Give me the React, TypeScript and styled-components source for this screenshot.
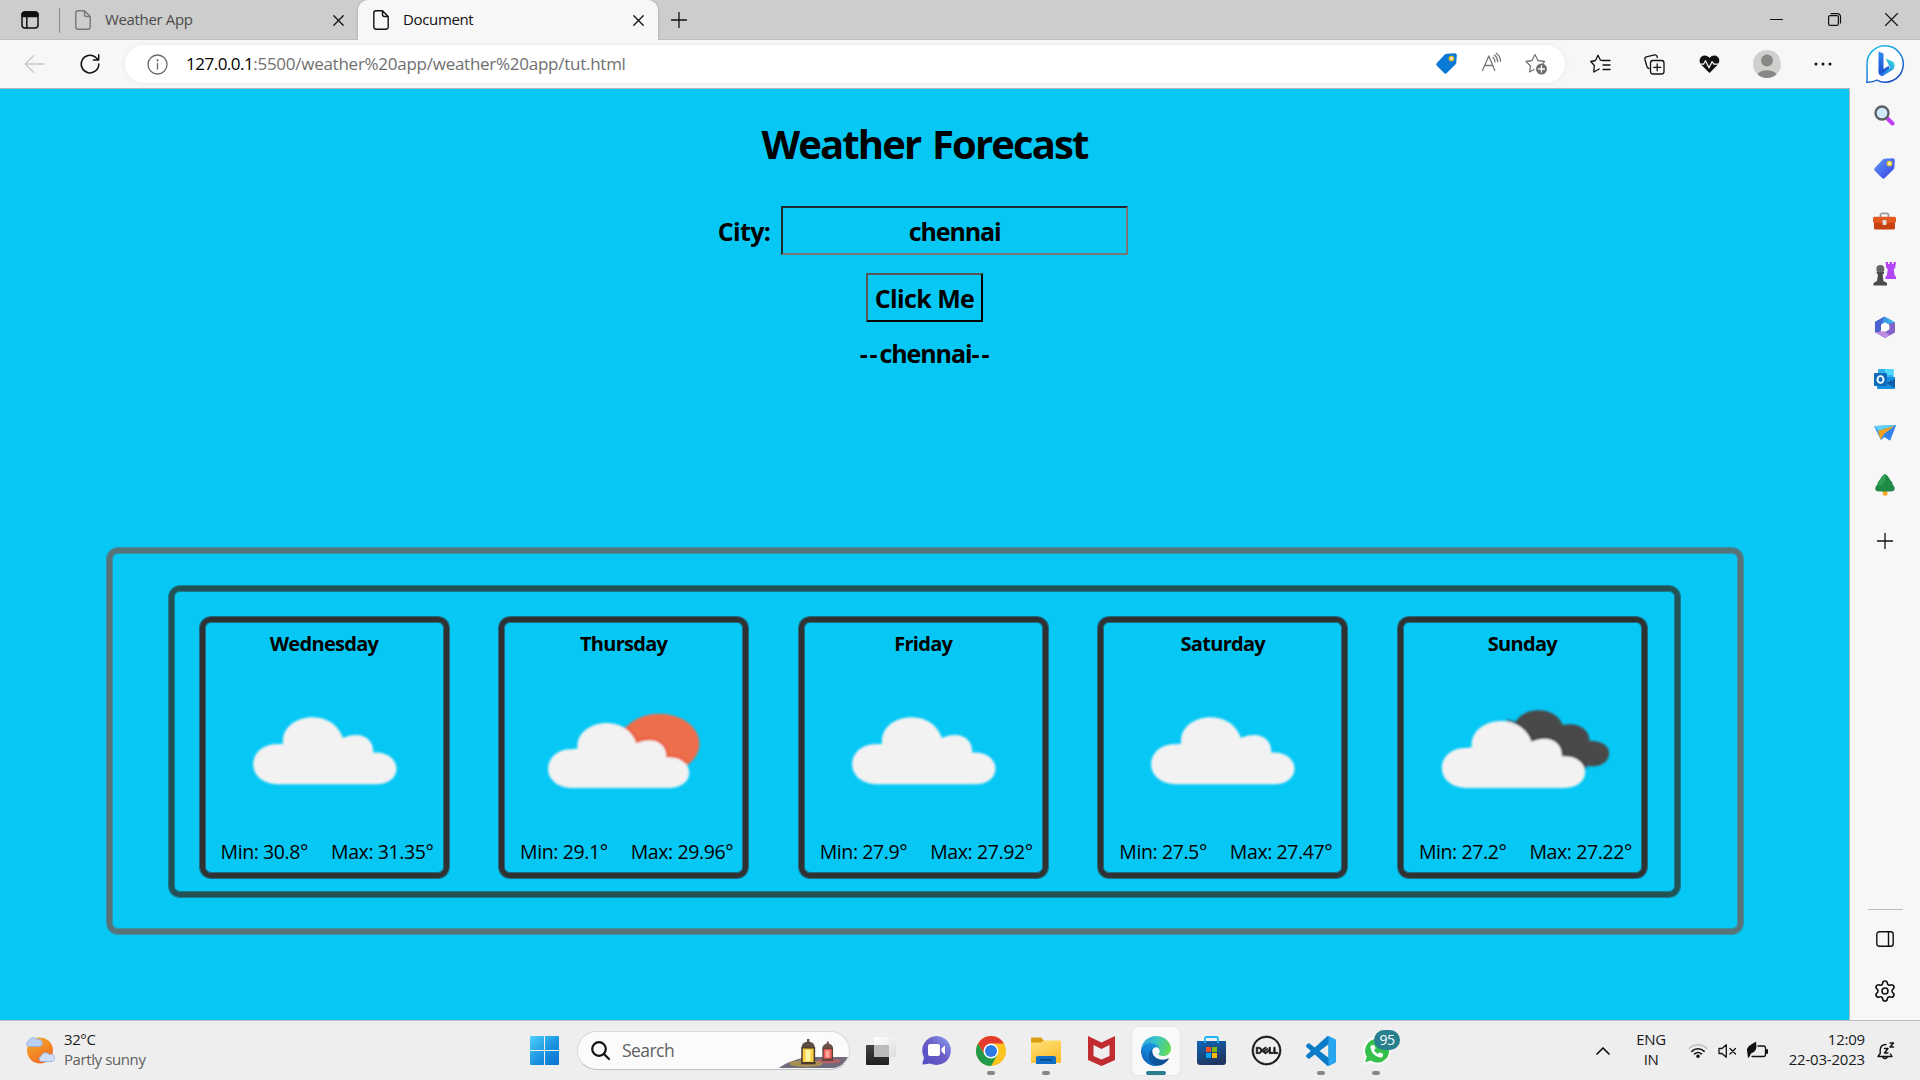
import React from 'react';
import styled, { createGlobalStyle } from 'styled-components';
import { Settings } from 'lucide-react';
import { FaPhone } from 'react-icons/fa6';
import { SiDell } from 'react-icons/si';

const Global = createGlobalStyle`
  * { box-sizing: border-box; }
  body { margin: 0; overflow: hidden; font-family: "Open Sans", "Noto Sans", sans-serif; }
  svg { display: block; flex: none; overflow: visible; }
`;

const Screen = styled.div`
  width: 1920px;
  height: 1080px;
  display: flex;
  flex-direction: column;
  background: #f7f7f7;
  overflow: hidden;
`;

/* ---------- tab strip ---------- */
const TabStrip = styled.header`
  height: 40px;
  flex: none;
  display: flex;
  background: #cdcdcd;
  box-shadow: inset 0 -1px 0 #bdbdbd;
`;
const TabActions = styled.div`
  width: 60px;
  padding: 11px 0 0 21px;
  display: flex;
  justify-content: space-between;
  &::after { content: ''; width: 1px; height: 25px; margin-top: -3px; background: #8b8b8b; }
`;
const Tab = styled.div<{ $active?: boolean; $width: number }>`
  width: ${p => p.$width}px;
  height: 40px;
  padding: 0 14px 0 15px;
  display: flex;
  align-items: center;
  border-radius: 10px 10px 0 0;
  background: ${p => (p.$active ? '#f7f7f7' : 'transparent')};
  color: ${p => (p.$active ? '#111' : '#4a4a4a')};
  box-shadow: ${p => (p.$active ? '0 0 3px rgba(0,0,0,.22)' : 'none')};
  clip-path: inset(0 -4px 0 -4px);
`;
const TabTitle = styled.span`
  flex: 1;
  margin-left: 14px;
  padding-bottom: 2px;
  font-size: 15px;
  line-height: 20px;
  letter-spacing: -0.35px;
`;
const NewTab = styled.div`padding: 12px 0 0 13px;`;
const WindowButtons = styled.div`
  margin-left: auto;
  display: flex;
  gap: 44.5px;
  padding: 13px 22px 0 0;
`;

/* ---------- toolbar ---------- */
const Toolbar = styled.div`
  height: 48px;
  flex: none;
  display: flex;
  align-items: center;
  background: #f7f7f7;
  padding-left: 24px;
`;
const NavButtons = styled.div`
  width: 101px;
  flex: none;
  padding-right: 25px;
  display: flex;
  align-items: center;
  justify-content: space-between;
`;
const AddressBar = styled.div`
  width: 1440px;
  flex: none;
  height: 38px;
  border-radius: 19px;
  background: #fff;
  box-shadow: 0 0 5px rgba(0, 0, 0, .07);
  display: flex;
  align-items: center;
  padding: 0 17px 0 22px;
`;
const Url = styled.div`
  flex: 1;
  margin-left: 18px;
  font-size: 17px;
  line-height: 24px;
  letter-spacing: -0.26px;
  color: #707070;
  b { font-weight: 400; color: #000; letter-spacing: -0.5px; }
`;
const AddressActions = styled.div`display: flex; gap: 24px;`;
const ToolActions = styled.div`
  flex: 1;
  display: flex;
  align-items: center;
  padding: 0 16px 0 25px;
  gap: 33.3px;
`;
const Last = styled.div`margin-left: auto;`;

/* ---------- page ---------- */
const Body = styled.div`flex: 1; display: flex; min-height: 0;`;
const Page = styled.main`
  width: 1850px;
  border-top: 1px solid #b4b7b8;
  border-right: 1px solid #b4b7b8;
  background: #07c8f5;
  color: #000;
  display: flex;
  flex-direction: column;
  align-items: center;
`;
const Title = styled.h1`
  margin: 27px 0 0;
  font-size: 40px;
  line-height: 56px;
  font-weight: 700;
  letter-spacing: -1.85px;
  word-spacing: 3px;
`;
const CityForm = styled.form`
  display: flex;
  flex-direction: column;
  align-items: center;
  margin-top: 34px;
  font-size: 25px;
  font-weight: 700;
`;
const Field = styled.label`
  display: flex;
  align-items: center;
  gap: 11px;
  letter-spacing: -0.7px;
  margin-right: 3px;
`;
const CityInput = styled.input`
  width: 347px;
  height: 49px;
  padding: 0;
  border: 2px solid;
  border-color: #1e2a2c #767676 #767676 #1e2a2c;
  background: transparent;
  font: inherit;
  letter-spacing: -1.1px;
  text-align: center;
  color: #000;
  outline: none;
`;
const SubmitButton = styled.button`
  width: 117px;
  height: 49px;
  margin-top: 18px;
  padding: 0;
  border: 2px solid;
  border-color: #555 #000 #000 #555;
  background: transparent;
  font: inherit;
  color: #000;
  letter-spacing: -0.6px;
  white-space: nowrap;
`;
const CityName = styled.div`
  display: flex;
  margin: 14px 0 0 2px;
  font-size: 25px;
  line-height: 34px;
  font-weight: 700;
  letter-spacing: -1.1px;
`;
const Dashes = styled.span`letter-spacing: 1.9px;`;

const Frame = styled.section<{ $edge: string; $color: string }>`
  border: 5px solid ${p => p.$color};
  border-radius: 11px;
  box-shadow: 0 0 0 1px ${p => p.$edge}, inset 0 0 0 1px ${p => p.$edge};
`;
const Outer = styled(Frame)`
  width: 1636px;
  height: 386px;
  margin-top: 178px;
  padding: 33px 57px;
`;
const Inner = styled(Frame)`
  width: 1511px;
  height: 311px;
  padding: 26px;
  display: flex;
  gap: 50.6px;
`;
const Card = styled(Frame)`
  width: 249px;
  flex: none;
  height: 261px;
  display: flex;
  flex-direction: column;
  align-items: center;
`;
const Day = styled.h2`
  margin: 8px 0 0;
  font-size: 20px;
  line-height: 28px;
  font-weight: 700;
  letter-spacing: -0.7px;
`;
const Sky = styled.div`
  flex: 1;
  display: flex;
  justify-content: center;
  padding: 47px 0 0 1px;
`;
const Temps = styled.div`
  width: 100%;
  display: flex;
  justify-content: space-between;
  padding: 0 10px 7px 16px;
  font-size: 19.5px;
  line-height: 28px;
  letter-spacing: -0.4px;
  white-space: nowrap;
`;

/* ---------- sidebar ---------- */
const Sidebar = styled.aside`
  width: 70px;
  padding: 1px 1px 7px 0;
  display: flex;
  flex-direction: column;
  align-items: center;
  background: #f7f7f7;
`;
const SideItem = styled.div<{ $h?: number }>`
  height: ${p => p.$h ?? 52.8}px;
  display: flex;
  align-items: center;
  justify-content: center;
`;
const SideRule = styled.div`
  margin: auto 0 0 1px;
  width: 35px;
  height: 1px;
  background: #bdbdbd;
`;

/* ---------- taskbar ---------- */
const Taskbar = styled.footer`
  height: 60px;
  flex: none;
  display: flex;
  align-items: center;
  border-top: 1px solid #bcbfc0;
  background: #eee;
  color: #1b1b1b;
`;
const Weather = styled.div`
  width: 520px;
  display: flex;
  align-items: center;
  gap: 9px;
  padding-left: 25px;
`;
const TwoLines = styled.div`
  padding-bottom: 4px;
  font-size: 15px;
  line-height: 20px;
  letter-spacing: -0.4px;
  white-space: nowrap;
`;
const Muted = styled.div`color: #5f5f5f;`;
const Slot = styled.div<{ $active?: boolean }>`
  position: relative;
  width: 48px;
  height: 48px;
  margin-right: 7px;
  display: flex;
  align-items: center;
  justify-content: center;
  border-radius: 6px;
  background: ${p => (p.$active ? '#f9f9f9' : 'transparent')};
  box-shadow: ${p => (p.$active ? '0 0 0 1px #e6e6e6' : 'none')};
`;
const Running = styled.i<{ $active?: boolean }>`
  position: absolute;
  left: ${p => (p.$active ? 14 : 20)}px;
  bottom: 0;
  width: ${p => (p.$active ? 20 : 8)}px;
  height: 4px;
  border-radius: 2px;
  background: ${p => (p.$active ? '#2a7f8c' : '#868686')};
`;
const Badge = styled.b`
  position: absolute;
  left: 22px;
  top: 3px;
  width: 26px;
  height: 20px;
  border-radius: 10px;
  background: #26808e;
  color: #fff;
  font-weight: 400;
  font-size: 14px;
  line-height: 19px;
  text-align: center;
  letter-spacing: -0.4px;
`;
const SearchBox = styled.div`
  width: 273px;
  height: 39px;
  margin: 0 7px 0 2px;
  padding-left: 13px;
  display: flex;
  align-items: center;
  border-radius: 20px;
  border: 1px solid #dadada;
  border-bottom-color: #c2c2c2;
  background: #fbfbfb;
  font-size: 17.5px;
  letter-spacing: -0.55px;
  color: #606060;
  overflow: hidden;
`;
const SearchText = styled.span`flex: 1; margin-left: 12px; padding-bottom: 2px;`;
const ArtSlot = styled.div`align-self: flex-end; padding-bottom: 1px;`;
const Tray = styled.div`
  margin-left: auto;
  display: flex;
  align-items: center;
  padding-right: 25px;
`;
const Lang = styled(TwoLines)`width: 30px; margin: 0 22px 0 26px; text-align: center;`;
const Status = styled.div`display: flex; gap: 10px; align-items: center;`;
const Clock = styled(TwoLines)`
  width: 80px;
  margin: 0 12px 0 17px;
  text-align: right;
  letter-spacing: -0.2px;
`;

/* ---------- icons ---------- */
type IconProps = { w?: number; h?: number; box?: string; color?: string; sw?: number; children: React.ReactNode };
const Line = ({ w = 20, h = w, box, color = '#111', sw = 1.3, children }: IconProps) => (
  <svg width={w} height={h} viewBox={box ?? `0 0 ${w} ${h}`} fill="none" stroke={color} strokeWidth={sw} strokeLinecap="round" strokeLinejoin="round">
    {children}
  </svg>
);
const Art = ({ w = 20, h = w, box, children }: IconProps) => (
  <svg width={w} height={h} viewBox={box ?? `0 0 ${w} ${h}`}>{children}</svg>
);

const PageIcon = ({ color }: { color: string }) => (
  <Line w={16} h={20} color={color} sw={1.4}>
    <path d="M9.500 .8H3A2.200 2.200 0 0 0 .8 3v14A2.200 2.200 0 0 0 3 19.200h10a2.200 2.200 0 0 0 2.200-2.200V6.500zV4.500a2 2 0 0 0 2 2h3.700" />
  </Line>
);
const Cross = () => (
  <Line w={11} color="#111" sw={1.3}><path d="M.8.8l9.400 9.400M10.200.8L.8 10.200" /></Line>
);

const CLOUD = 'M565 763C520 763 488 738 488 703C488 668 520 641 560 643L578 641C572 598 612 562 668 562C712 562 745 588 757 624C770 618 783 615 797 615C828 615 850 636 848 668C890 664 918 688 918 716C918 742 895 763 855 763Z';

type Kind = 'cloud' | 'sun' | 'dark';
const SkyIcon = ({ kind }: { kind: Kind }) => (
  <svg width="188" height="90" viewBox="421.5 525 564 270">
    <defs>
      <clipPath id="sunClip"><ellipse cx="812" cy="632" rx="118" ry="90" /></clipPath>
      <clipPath id="darkClip"><path d="M680 545L903 560L962 680L920 706L860 706L690 600Z" /></clipPath>
      <filter id="soft" x="-5%" y="-5%" width="110%" height="110%"><feGaussianBlur stdDeviation="2.4" /></filter>
    </defs>
    <g filter="url(#soft)">
      {kind === 'cloud' && <path d={CLOUD} fill="#f2f2f2" />}
      {kind === 'sun' && (
        <>
          <ellipse cx="810" cy="641" rx="120" ry="90" fill="#ec6e4c" />
          <path d={CLOUD} transform="translate(-5 34) scale(.985 .97)" fill="none" stroke="#ee4a2c" strokeOpacity=".8" strokeWidth="12" clipPath="url(#sunClip)" />
          <path d={CLOUD} transform="translate(-5 34) scale(.985 .97)" fill="#f2f2f2" />
        </>
      )}
      {kind === 'dark' && (
        <>
          <path d="M681 577C693 553 720 541 751 541C785 541 812 558 823 585C856 576 903 590 903 632C940 632 962 648 962 669C962 694 940 709 911 709L860 709L700 640Z" fill="#48484a" />
          <path d={CLOUD} transform="translate(-28 11)" fill="none" stroke="#333437" strokeOpacity=".8" strokeWidth="12" clipPath="url(#darkClip)" />
          <path d={CLOUD} transform="translate(-28 11)" fill="#f2f2f2" />
        </>
      )}
    </g>
  </svg>
);

const Tag = ({ a, b, hole }: { a: string; b: string; hole: string }) => (
  <Art w={21}>
    <defs><linearGradient id={`t${a.slice(1)}`} x2="1" y2="1"><stop stopColor={a} /><stop offset="1" stopColor={b} /></linearGradient></defs>
    <path d="M10.500.8L18.500.2A2 2 0 0 1 20.800 2.400L20.300 9.800A3 3 0 0 1 19.400 11.600L10.800 20A2 2 0 0 1 8 20L.8 12.800A2 2 0 0 1 .8 10L8.800 1.600A3 3 0 0 1 10.500.8Z" fill={`url(#t${a.slice(1)})`} />
    <circle cx="15.500" cy="5.500" r="2.200" fill="#fff3c4" stroke={hole} strokeWidth="1.300" />
  </Art>
);

const Bing = () => (
  <Art w={38}>
    <defs>
      <linearGradient id="bb" x1="0" y1="0" x2=".6" y2="1"><stop stopColor="#1fcbf0" /><stop offset="1" stopColor="#1b50c8" /></linearGradient>
      <linearGradient id="bs" x2="0" y2="1"><stop stopColor="#2f8cf2" /><stop offset="1" stopColor="#1b49c9" /></linearGradient>
      <linearGradient id="bc" x1="1" x2="0" y2="1"><stop stopColor="#3ae0dc" /><stop offset="1" stopColor="#2560ea" /></linearGradient>
    </defs>
    <path d="M19 .8a18.200 18.200 0 1 1-8.200 34.400C8 36.800 4 37.300.8 37.200 1.500 33 1 30 1 19A18 18 0 0 1 19 .8Z" fill="#fff" stroke="url(#bb)" strokeWidth="1.500" />
    <path d="M12.500 6.500L17.500 8.500V24L23 20.800V24.500L17 30.500C14.500 31 12.500 29.500 12.500 27Z" fill="url(#bs)" />
    <path d="M19.800 13.500L26 16.200C29.500 18 29.400 23 26.500 25L17.500 30.500C15 31.700 13 30 12.700 27.500C14 29.500 16 28.500 17.500 27.500L24 22.500L22 18.500Z" fill="url(#bc)" />
  </Art>
);

const SideIcons: React.ReactNode[] = [
  <Art w={21}>
    <path d="M13.500 13.500L18.500 18.500" stroke="#c13cf5" strokeWidth="4" strokeLinecap="round" />
    <circle cx="8" cy="8" r="6.500" fill="#cfe8fa" stroke="#5f6063" strokeWidth="2.300" />
  </Art>,
  <Tag a="#5b9cf5" b="#3b3ce8" hole="#e8c820" />,
  <Art w={23} h={18}>
    <path d="M7.500 6V3a1.700 1.700 0 0 1 1.700-1.700h4.600A1.700 1.700 0 0 1 15.500 3V6" fill="none" stroke="#999" strokeWidth="1.700" />
    <rect x="1" y="5" width="21" height="12.500" rx="1.500" fill="#c8410f" />
    <rect x="0" y="4.800" width="23" height="6" rx="1.500" fill="#e3591f" />
    <rect x="9.500" y="8" width="4" height="5" rx="1" fill="#ddd" />
  </Art>,
  <Art w={23} h={23}>
    <path d="M12.500 0h2.500v2h1.500V0h2.500v2h1.500V0H23l-.8 6-1.400 1 .7 6 1.500 2v2H12.500v-2l1.500-2 .7-6-1.400-1Z" fill="#b445f5" />
    <circle cx="7.300" cy="7" r="4" fill="#666" />
    <path d="M3.500 10h7.600l-.5 2-1 .5.900 6.500L14 21v2.500H.500V21L4 19l1-6.500-1-.5Z" fill="#4b4b4b" />
  </Art>,
  <Art w={22}>
    <defs><linearGradient id="m3" x2="1"><stop stopColor="#3a6be0" /><stop offset="1" stopColor="#3ec4f2" /></linearGradient></defs>
    <path d="M10.500.5L20 5.500 21 12 15.500 9 11 6.500 7 8.500V14L1 16.500V6Z" fill="url(#m3)" />
    <path d="M1 6L10 1 7.500 6 7 14 6 17.500 1 16.500Z" fill="#4a62cf" />
    <path d="M21 6V16.500L11 22 1.500 16.500 6 17.500 15.500 12.500 15 8Z" fill="#8261c9" />
    <path d="M1.500 16.500L11 22 16 19 9 15Z" fill="#c18be0" />
    <path d="M11 6.500L15.200 9v4.500L11 16 7 13.500V9Z" fill="#fff" />
  </Art>,
  <Art w={21} h={20}>
    <rect x="4" y="0" width="15.500" height="12" rx="1" fill="#33b1ec" />
    <rect x="11" y="0" width="8.500" height="6" fill="#50d9ff" />
    <path d="M3 8h18v11a1 1 0 0 1-1 1H4a1 1 0 0 1-1-1Z" fill="#1490df" />
    <path d="M21 10v9L12 14Z" fill="#0f5ea8" />
    <rect x="0" y="4" width="13" height="13" rx="1" fill="#0f6cbd" />
    <ellipse cx="6.500" cy="10.500" rx="3" ry="3.400" fill="none" stroke="#fff" strokeWidth="1.900" />
  </Art>,
  <Art w={22} h={17}>
    <path d="M0 2L22 1 16 16.500 10.500 13 7 16Z" fill="#2f8fef" />
    <path d="M0 2L22 1 4.500 7Z" fill="#5fd0f5" />
    <path d="M4 7L21.500 1.500 9.500 11 6.500 15.500Z" fill="#f3a21c" />
    <path d="M10 10L22 1 16 16.500 9 12Z" fill="#3482ee" />
  </Art>,
  <Art w={20} h={21}>
    <rect x="7.800" y="15" width="4.600" height="6.500" rx="1" fill="#f3a51d" />
    <path d="M10 0C14 2 14 5 17 8C18 9 17 9.500 18 11C21 14 20 17.500 16 17.500H4C0 17.500-1 14 2 11C3 9.500 2 9 3 8C6 5 6 2 10 0Z" fill="#1f8a48" />
    <path d="M10 0C7 2 6.500 5 4 8C2 11 3 12 6 11C11 8 11 4 10 0Z" fill="#39a95a" opacity=".7" />
  </Art>,
];

const WeatherBug = () => (
  <Art w={30} h={30}>
    <defs><linearGradient id="sun" x2=".6" y2="1"><stop stopColor="#f3b52d" /><stop offset="1" stopColor="#f26a21" /></linearGradient></defs>
    <circle cx="15" cy="14.500" r="13" fill="url(#sun)" />
    <path d="M3.500 10.500a3 3 0 0 1 0-5.500A5 5 0 0 1 12 3.500a3.600 3.600 0 0 1 3 7Z" fill="#bcd0f2" stroke="#8fabe0" strokeWidth=".8" />
    <path d="M16 25.500a3 3 0 0 1 0-5.500 5 5 0 0 1 8.500-1.500 3.600 3.600 0 0 1 2.500 7Z" fill="#cfdef8" stroke="#8fabe0" strokeWidth=".8" />
  </Art>
);

const Lanterns = () => (
  <Art w={70} h={29}>
    <path d="M0 29C8 23 20 18.500 34 18H69C66 24 61 28 55 29Z" fill="#6e6a7c" />
    <ellipse cx="27" cy="24.500" rx="17" ry="3.500" fill="#c9a83a" opacity=".6" />
    <ellipse cx="50" cy="22" rx="12" ry="2.500" fill="#e05a60" opacity=".6" />
    <path d="M22.500 8.500a6.700 6 0 0 1 13.400 0Z" fill="#5e4b42" />
    <rect x="28" y="0" width="2.400" height="4" fill="#5e4b42" />
    <rect x="23" y="8.800" width="12.400" height="15" fill="#f7cf3f" stroke="#4a3a33" strokeWidth="1.500" />
    <rect x="26.500" y="11" width="5" height="11" fill="#fff3a8" />
    <rect x="22" y="23" width="14.400" height="2.300" fill="#4a3a33" />
    <path d="M43.300 9.500a5.400 5 0 0 1 10.800 0Z" fill="#6b5148" />
    <rect x="47.800" y="2.500" width="2" height="3" fill="#6b5148" />
    <rect x="44" y="9.500" width="9.400" height="11" fill="#ef5a5d" stroke="#5b4038" strokeWidth="1.300" />
    <rect x="46.500" y="11.500" width="4" height="7" fill="#ffa79a" />
    <rect x="43.200" y="19.800" width="11" height="2" fill="#5b4038" />
  </Art>
);

const StartLogo = () => (
  <Art w={29}>
    <defs><linearGradient id="win" x2="1" y2="1"><stop stopColor="#4fd0fb" /><stop offset=".55" stopColor="#1b93e0" /><stop offset="1" stopColor="#0a6fd0" /></linearGradient></defs>
    <path d="M1 0H14V14H0V1A1 1 0 0 1 1 0ZM15 0H28A1 1 0 0 1 29 1V14H15ZM0 15H14V29H1A1 1 0 0 1 0 28ZM15 15H29V28A1 1 0 0 1 28 29H15Z" fill="url(#win)" />
  </Art>
);
const TaskView = () => (
  <Art w={30} h={28}>
    <defs>
      <linearGradient id="tv" x2="0" y2="1"><stop stopColor="#444" /><stop offset="1" stopColor="#1e1e1e" /></linearGradient>
      <linearGradient id="tv2" x2="1" y2="1"><stop stopColor="#fff" /><stop offset="1" stopColor="#ddd" /></linearGradient>
    </defs>
    <rect x="0" y="8" width="23" height="20" rx="1" fill="url(#tv)" />
    <rect x="8" y="0" width="22" height="20" rx="1" fill="url(#tv2)" />
    <rect x="8" y="8" width="15" height="12" fill="#bcbcbc" />
  </Art>
);
const Chat = () => (
  <Art w={29} h={29}>
    <defs><linearGradient id="chat" x1="0" y1="1" x2="1" y2="0"><stop stopColor="#4f4fc4" /><stop offset=".5" stopColor="#6a5bc8" /><stop offset="1" stopColor="#8aa2f0" /></linearGradient></defs>
    <path d="M14.500 0A14.500 14.500 0 1 1 8 27.500L1.500 28.500Q0 28.500.5 27L2 21.500A14.500 14.500 0 0 1 14.500 0Z" fill="url(#chat)" />
    <rect x="6" y="8" width="12" height="12" rx="2" fill="#fff" />
    <path d="M19.500 12.500L23 9.500V18.500L19.500 15.500Z" fill="#fff" />
  </Art>
);
const Chrome = () => (
  <Art w={30} box="-15 -15 30 30">
    <circle r="15" fill="#fcc31e" />
    <path d="M-13 -7.500A15 15 0 0 1 13 -7.500L0 -7.500L-6.500 3.750Z" fill="#e33b2e" />
    <path d="M-13 -7.500A15 15 0 0 0 0 15L6.500 3.750L-6.500 3.750Z" fill="#219a49" />
    <circle r="7.500" fill="#fff" /><circle r="6" fill="#2c7be5" />
  </Art>
);
const Explorer = () => (
  <Art w={30} h={27}>
    <defs><linearGradient id="fold" x2=".5" y2="1"><stop stopColor="#ffe37a" /><stop offset="1" stopColor="#fbbf31" /></linearGradient></defs>
    <path d="M0 1.500Q0 .500 1 .500H10L13 3.500V10H0Z" fill="#dc9c12" />
    <path d="M0 5.500H10L13 3.500H29Q30 3.500 30 4.500V25Q30 26 29 26H0Z" fill="url(#fold)" />
    <path d="M5 27V21Q5 19 7 19H23Q25 19 25 21V27Z" fill="#0f6fc6" />
    <path d="M9 22.800H21" stroke="#08427c" strokeWidth="1.300" />
  </Art>
);
const McAfee = () => (
  <Art w={27} h={30}><path d="M0 0L13.500 6.500L27 0V24L13.500 30L0 24ZM5.500 9V20L13.500 23.500L21.500 20V9L13.500 13Z" fill="#c02c2f" /></Art>
);
const Edge = () => (
  <Art w={30} box="0 0 256 256">
    <defs>
      <linearGradient id="e1" x1=".2" x2="1" y1=".5" y2=".5"><stop stopColor="#0c59a4" /><stop offset="1" stopColor="#114a8b" /></linearGradient>
      <linearGradient id="e2" x1=".8" y1="0" x2=".3" y2="1"><stop stopColor="#1b9de2" /><stop offset=".5" stopColor="#1383d8" /><stop offset="1" stopColor="#0b5cb0" /></linearGradient>
      <linearGradient id="e3" x1="0" y1=".3" x2="1" y2=".5"><stop stopColor="#2fa6dd" /><stop offset=".45" stopColor="#37c3c9" /><stop offset="1" stopColor="#64db52" /></linearGradient>
    </defs>
    <path fill="url(#e1)" d="M231.100 190.500c-3.400 1.800-6.900 3.400-10.500 4.700-11.500 4.300-23.600 6.500-35.900 6.500-47.300 0-88.500-32.500-88.500-74.300.1-11.400 6.400-21.900 16.400-27.300-42.800 1.800-53.800 46.400-53.800 72.500 0 73.900 68.100 81.400 82.800 81.400 7.900 0 19.800-2.300 27-4.600l1.300-.4c27.600-9.500 51-28.100 66.600-52.800 1.200-1.900.6-4.300-1.200-5.500-1.300-.8-2.900-.9-4.200-.2z" />
    <path fill="url(#e2)" d="M105.700 241.400c-8.900-5.500-16.600-12.800-22.700-21.300-26.300-36-18.400-86.500 17.600-112.800 3.800-2.700 7.700-5.200 11.900-7.200 3.100-1.500 8.400-4.100 15.500-4 10.100.1 19.600 4.900 25.700 13 4 5.400 6.300 11.900 6.400 18.700 0-.2 24.500-79.600-80-79.600-43.900 0-80 41.700-80 78.200-.2 19.300 4 38.500 12.100 56 27.600 58.800 94.800 87.600 156.400 67.100-21.100 6.600-44.100 3.700-62.900-8.100z" />
    <path fill="url(#e3)" d="M152.300 148.900c-.9 1-3.400 2.500-3.400 5.600 0 2.600 1.700 5.200 4.800 7.300 14.300 10 41.400 8.600 41.500 8.600 10.700 0 21.100-2.900 30.300-8.300 18.800-11 30.400-31.100 30.400-52.900.3-22.400-8-37.300-11.300-43.900C223.500 23.900 177.700 0 128 0 58 0 1 56.200 0 126.200c.5-36.500 36.800-66 80-66 3.500 0 23.500.3 42 10.100 16.300 8.600 24.900 18.900 30.800 29.200 6.200 10.700 7.300 24.100 7.300 29.500 0 5.300-2.700 13.300-7.800 19.900z" />
  </Art>
);
const Store = () => (
  <Art w={29} h={29}>
    <defs><linearGradient id="st" x2=".4" y2="1"><stop stopColor="#0f67b8" /><stop offset="1" stopColor="#1f3562" /></linearGradient></defs>
    <path d="M0 5H29V26A3 3 0 0 1 26 29H3A3 3 0 0 1 0 26Z" fill="url(#st)" />
    <path d="M8 7V2.500Q8 1 9.500 1H19.500Q21 1 21 2.500V7" fill="none" stroke="#22b4f3" strokeWidth="1.800" />
    <path d="M9 11h5v5H9z" fill="#f25022" /><path d="M15 11h5v5h-5z" fill="#7fba00" />
    <path d="M9 17h5v5H9z" fill="#00a4ef" /><path d="M15 17h5v5h-5z" fill="#ffb900" />
  </Art>
);
const VSCode = () => (
  <Art w={30} box="0 0 24 24">
    <path fill="#0b7dc8" d="M23.150 2.587L18.210.21a1.494 1.494 0 0 0-1.705.29l-9.460 8.630-4.120-3.128a.999.999 0 0 0-1.276.057L.327 7.261A1 1 0 0 0 .326 8.740L3.899 12 .326 15.260a1 1 0 0 0 .001 1.479L1.650 17.940a.999.999 0 0 0 1.276.057l4.120-3.128 9.460 8.630a1.492 1.492 0 0 0 1.704.29l4.942-2.377A1.500 1.500 0 0 0 24 20.060V3.939a1.500 1.500 0 0 0-.85-1.352zm-5.146 14.861L10.826 12l7.178-5.448v10.896z" />
    <path fill="#29a6f0" d="M18 0.150L23.150 2.587A1.500 1.500 0 0 1 24 3.939V20.060A1.500 1.500 0 0 1 23.150 21.410L18 23.850Z" />
  </Art>
);
const WhatsApp = () => (
  <Art w={29} h={30}>
    <path d="M15 .5A14 14 0 1 1 8.500 27L.5 29.500L2.800 21.500A14 14 0 0 1 15 .5Z" fill="#fafafa" />
    <path d="M15 3A11.800 11.800 0 1 1 8.800 24.600L3.200 26.200L4.800 20.800A11.800 11.800 0 0 1 15 3Z" fill="#35c04c" />
    <g transform="translate(8.500 9)"><FaPhone size={12.5} color="#fff" /></g>
  </Art>
);

/* ---------- data ---------- */
const days: { name: string; min: string; max: string; kind: Kind }[] = [
  { name: 'Wednesday', min: '30.8', max: '31.35', kind: 'cloud' },
  { name: 'Thursday', min: '29.1', max: '29.96', kind: 'sun' },
  { name: 'Friday', min: '27.9', max: '27.92', kind: 'cloud' },
  { name: 'Saturday', min: '27.5', max: '27.47', kind: 'cloud' },
  { name: 'Sunday', min: '27.2', max: '27.22', kind: 'dark' },
];

export default function App() {
  return (
    <Screen>
      <Global />
      <TabStrip>
        <TabActions>
          <Line w={18} sw={1.5}>
            <rect x="1" y="1" width="16" height="16" rx="3" />
            <path d="M1 5V4a3 3 0 0 1 3-3h10a3 3 0 0 1 3 3v1.500H1Z" fill="#111" />
            <path d="M5.800 5v12" />
          </Line>
        </TabActions>
        <Tab $width={298}>
          <PageIcon color="#777" />
          <TabTitle>Weather App</TabTitle>
          <Cross />
        </Tab>
        <Tab $width={300} $active>
          <PageIcon color="#111" />
          <TabTitle>Document</TabTitle>
          <Cross />
        </Tab>
        <NewTab><Line w={16}><path d="M8 .5v15M.5 8h15" /></Line></NewTab>
        <WindowButtons>
          <Line w={13} sw={1.2}><path d="M.5 6.500h12" /></Line>
          <Line w={13} sw={1.2}>
            <rect x=".6" y="2.600" width="9.800" height="9.800" rx="1.500" />
            <path d="M3 .6h6.500a3 3 0 0 1 3 3V10" />
          </Line>
          <Line w={13} sw={1.1}><path d="M.5.5l12 12M12.500.5l-12 12" /></Line>
        </WindowButtons>
      </TabStrip>

      <Toolbar>
        <NavButtons>
          <Line w={21} h={18} color="#c8c8c8"><path d="M20 9H1.200M9.500.8L1.200 9l8.300 8.200" /></Line>
          <Line w={20} sw={1.5}><path d="M18.800 10A8.800 8.800 0 1 1 15.500 3.200L18.500 6M18.700.8V6H13.500" /></Line>
        </NavButtons>
        <AddressBar>
          <Line w={21} color="#6b6b6b">
            <circle cx="10.500" cy="10.500" r="9.500" /><path d="M10.500 9.500v5.500" /><circle cx="10.500" cy="6.300" r=".5" fill="#6b6b6b" />
          </Line>
          <Url><b>127.0.0.1</b>:5500/weather%20app/weather%20app/tut.html</Url>
          <AddressActions>
            <Tag a="#0b7ad6" b="#0878d4" hole="#e8b422" />
            <Line w={20} color="#777">
              <path d="M1.500 17.500L7.800 3l6 14.500M3.500 12.500h8.400" />
              <path d="M12 4.500q2 1.700 2 4.500M13.500 2.200q3.200 2.300 3.200 6.300M15.200.3q4.300 3 4.300 8" />
            </Line>
            <Line w={23} color="#777">
              <path d="M9 16.500L4.500 19l1-6L1 8.500l6-1L10 1.500l3 6 6.500 1-1.500 2" />
              <circle cx="16.500" cy="16" r="5.500" fill="#6e6e6e" stroke="none" />
              <path d="M16.500 13v6M13.500 16h6" stroke="#fff" />
            </Line>
          </AddressActions>
        </AddressBar>
        <ToolActions>
          <Line w={21}>
            <path d="M13 6.500l-2.500-.3L8 1.200 5.500 6.500.800 7.500l3.500 4L3.800 18l5.400-3M13.500 6.500h6.500M13 11h7M13 15.500h7" />
          </Line>
          <Line w={21}>
            <rect x="6.500" y="6.500" width="13.500" height="13.500" rx="2.500" /><path d="M13.200 9.800v7M9.700 13.300h7" />
            <path d="M5 14.500Q3.500 14.300 3 12.800L.9 5.500Q.5 3.500 2.300 2.900L10.500.9Q12.300.6 13 2.200L13.300 3.500" />
          </Line>
          <Line w={21}>
            <path d="M10.500 19L2 10.500C-.8 7 1 1.500 5.500 1.500 8 1.500 9.500 2.700 10.500 4 11.500 2.700 13 1.500 15.500 1.500 20 1.500 21.800 7 19 10.500Z" fill="#111" stroke="none" />
            <path d="M0 10.200h4.500l2-3.500 3.500 7 3-6 2 2.500h6" stroke="#f7f7f7" />
          </Line>
          <Art w={28}>
            <circle cx="14" cy="14" r="14" fill="#d2d0ce" />
            <circle cx="14" cy="10.500" r="6" fill="#8a8886" />
            <path d="M4.500 24.300a10.500 7 0 0 1 19 0A14 14 0 0 1 4.500 24.300Z" fill="#8a8886" />
          </Art>
          <Art w={18} h={4}><g fill="#111"><circle cx="2" cy="2" r="1.500" /><circle cx="9" cy="2" r="1.500" /><circle cx="16" cy="2" r="1.500" /></g></Art>
          <Last><Bing /></Last>
        </ToolActions>
      </Toolbar>

      <Body>
        <Page>
          <Title>Weather Forecast</Title>
          <CityForm>
            <Field>City: <CityInput defaultValue="chennai" /></Field>
            <SubmitButton type="button">Click Me</SubmitButton>
          </CityForm>
          <CityName><Dashes>--</Dashes>chennai<Dashes>--</Dashes></CityName>
          <Outer $color="#587377" $edge="rgba(88,115,119,.65)">
            <Inner $color="#235255" $edge="rgba(35,82,85,.65)">
              {days.map(d => (
                <Card key={d.name} as="article" $color="#303133" $edge="rgba(48,49,51,.6)">
                  <Day>{d.name}</Day>
                  <Sky><SkyIcon kind={d.kind} /></Sky>
                  <Temps><span>Min: {d.min}°</span><span>Max: {d.max}°</span></Temps>
                </Card>
              ))}
            </Inner>
          </Outer>
        </Page>
        <Sidebar>
          {SideIcons.map((icon, i) => <SideItem key={i}>{icon}</SideItem>)}
          <SideItem $h={59}><Line w={16}><path d="M8 .5v15M.5 8h15" /></Line></SideItem>
          <SideRule />
          <SideItem $h={58}>
            <Line w={18} h={16} sw={1.4}><rect x=".8" y=".8" width="16.400" height="14.400" rx="2.500" /><path d="M12.500 1v14" /></Line>
          </SideItem>
          <SideItem $h={45}><Settings size={24} strokeWidth={1.6} color="#111" /></SideItem>
        </Sidebar>
      </Body>

      <Taskbar>
        <Weather>
          <WeatherBug />
          <TwoLines>32°C<Muted>Partly sunny</Muted></TwoLines>
        </Weather>
        <Slot><StartLogo /></Slot>
        <SearchBox>
          <Line w={19} sw={2.2}><circle cx="8" cy="8" r="6.800" /><path d="M13 13l5 5" /></Line>
          <SearchText>Search</SearchText>
          <ArtSlot><Lanterns /></ArtSlot>
        </SearchBox>
        <Slot><TaskView /></Slot>
        <Slot><Chat /></Slot>
        <Slot><Chrome /><Running /></Slot>
        <Slot><Explorer /><Running /></Slot>
        <Slot><McAfee /></Slot>
        <Slot $active><Edge /><Running $active /></Slot>
        <Slot><Store /></Slot>
        <Slot><SiDell size={29} color="#111" stroke="#111" strokeWidth={0.5} /></Slot>
        <Slot><VSCode /><Running /></Slot>
        <Slot><WhatsApp /><Running /><Badge>95</Badge></Slot>
        <Tray>
          <Line w={14} h={8} sw={1.7}><path d="M1 7l6-6 6 6" /></Line>
          <Lang>ENG<br />IN</Lang>
          <Status>
            <Line w={20} h={15} sw={1.6}>
              <path d="M1 5.500a13 13 0 0 1 18 0" stroke="#c4c4c4" />
              <path d="M3.800 8.300a9 9 0 0 1 12.400 0M6.500 11a5 5 0 0 1 7 0" />
              <circle cx="10" cy="13.200" r="1" fill="#111" />
            </Line>
            <Line w={19} h={14}>
              <path d="M1 4.500h3L8.300.8v12.400L4 9.500H1ZM12 4.500l5.500 5.500M17.500 4.500L12 10" />
            </Line>
            <Line w={21} h={17}>
              <path d="M11 4h5.500a2 2 0 0 1 2 2v6.500a2 2 0 0 1-2 2H5" />
              <path d="M20 8v3" strokeWidth="2" />
              <path d="M8.500.5C9.500 6 8 9.500 4 10.500L1.500 15 .8 9C0 5 4 3.500 8.500.5Z" fill="#111" />
            </Line>
          </Status>
          <Clock>12:09<br />22-03-2023</Clock>
          <Line w={18} h={18} sw={1.4}>
            <path d="M9 2.500Q3.500 2.500 3.200 8v3.500L1 14.500H15L13.500 12M6 15.500a2.500 2.500 0 0 0 4 0" />
            <path d="M7.500 6.500h3.500L7.500 11h3.500M13 1h3.500L13 5h3.500" />
          </Line>
        </Tray>
      </Taskbar>
    </Screen>
  );
}
